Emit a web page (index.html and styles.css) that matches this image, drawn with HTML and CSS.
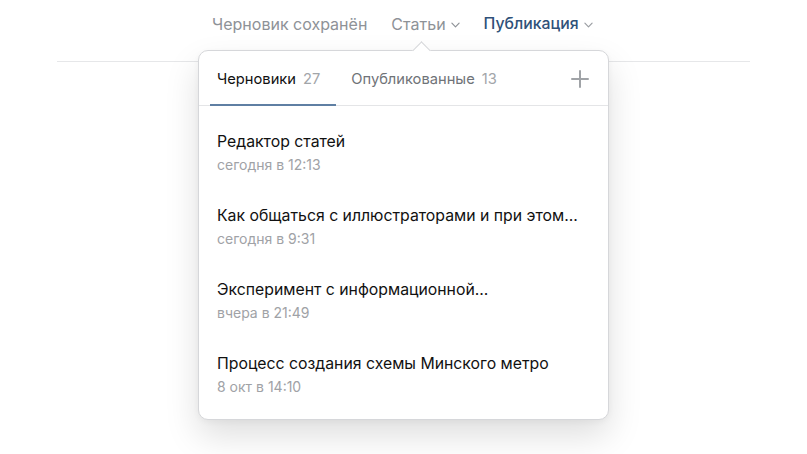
FILE: index.html
```html
<!DOCTYPE html>
<html lang="ru">
<head>
<meta charset="utf-8">
<link rel="stylesheet" href="styles.css">
</head>
<body>
<header class="header">
  <nav class="nav">
    <span class="nav-status">Черновик сохранён</span>
    <span class="nav-item">Статьи<svg class="chev" viewBox="0 0 10 6" width="10" height="6"><path d="M1 1l4 4 4-4" fill="none" stroke="currentColor" stroke-width="1.3" stroke-linecap="round" stroke-linejoin="round"/></svg></span>
    <span class="nav-item nav-active">Публикация<svg class="chev" viewBox="0 0 10 6" width="10" height="6"><path d="M1 1l4 4 4-4" fill="none" stroke="#9a9da2" stroke-width="1.3" stroke-linecap="round" stroke-linejoin="round"/></svg></span>
  </nav>
</header>

<div class="popup">
  <div class="popup-arrow"></div>
  <div class="tabs">
    <div class="tab tab-active">Черновики<span class="count">27</span></div>
    <div class="tab">Опубликованные<span class="count">13</span></div>
    <div class="tabs-spacer"></div>
    <svg class="plus" viewBox="0 0 18 18" width="18" height="18"><path d="M9 1v16M1 9h16" stroke="#a0a3a7" stroke-width="2" stroke-linecap="round"/></svg>
  </div>
  <ul class="list">
    <li class="item"><div class="title">Редактор статей</div><div class="date">сегодня в 12:13</div></li>
    <li class="item"><div class="title">Как общаться с иллюстраторами и при этом...</div><div class="date">сегодня в 9:31</div></li>
    <li class="item"><div class="title">Эксперимент с информационной...</div><div class="date">вчера в 21:49</div></li>
    <li class="item"><div class="title">Процесс создания схемы Минского метро</div><div class="date">8 окт в 14:10</div></li>
  </ul>
</div>
</body>
</html>
```

FILE: styles.css
```css
* { box-sizing: border-box; }
html, body {
  margin: 0;
  padding: 0;
  background: #ffffff;
  font-family: Inter, "Noto Sans", "Liberation Sans", sans-serif;
  -webkit-font-smoothing: antialiased;
}
body {
  width: 807px;
  height: 454px;
  overflow: hidden;
  position: relative;
}
.header {
  width: 693px;
  margin: 0 auto;
  height: 62px;
  border-bottom: 1px solid #e6e7e9;
}
.nav {
  display: flex;
  align-items: center;
  gap: 24px;
  padding-left: 155px;
  padding-top: 13px;
  font-size: 16px;
  line-height: 22px;
  color: #8e9297;
}
.nav-item {
  display: flex;
  align-items: center;
  gap: 5px;
}
.nav-active {
  color: #2f5179;
  font-weight: 500;
  font-size: 15.8px;
}
.chev { margin-top: 2px; width: 9px; }

.popup {
  position: absolute;
  left: 198px;
  top: 50px;
  width: 411px;
  height: 370px;
  background: #fff;
  border: 1px solid #d6d7da;
  border-radius: 10px;
  box-shadow: 0 16px 34px rgba(0, 0, 0, 0.13), 0 2px 6px rgba(0, 0, 0, 0.04);
}
.popup-arrow {
  position: absolute;
  left: 216px;
  top: -7px;
  width: 13px;
  height: 13px;
  background: #fff;
  border-left: 1px solid #d6d7da;
  border-top: 1px solid #d6d7da;
  transform: rotate(45deg);
}
.tabs {
  position: relative;
  display: flex;
  align-items: stretch;
  height: 55px;
  padding-left: 11px;
  padding-right: 19px;
  border-bottom: 1px solid #e4e5e7;
}
.tab {
  display: flex;
  align-items: center;
  padding: 2px 16px 0 7px;
  font-size: 14.7px;
  color: #6f7378;
  border-bottom: 2px solid transparent;
  margin-bottom: -1px;
}
.tab + .tab { padding-left: 15px; }
.tab-active {
  color: #111;
  border-bottom-color: #5f7fa3;
}
.count {
  margin-left: 7px;
  color: #a2a5a9;
}
.tabs-spacer { flex: 1; }
.plus { align-self: center; margin-top: 2px; }

.list {
  list-style: none;
  margin: 0;
  padding: 10px 0 8px;
}
.item {
  padding: 16px 18px;
  height: 74px;
}
.title {
  font-size: 15.8px;
  line-height: 20px;
  color: #111;
}
.date {
  margin-top: 4px;
  font-size: 14px;
  line-height: 18px;
  color: #a0a2a6;
}
```
